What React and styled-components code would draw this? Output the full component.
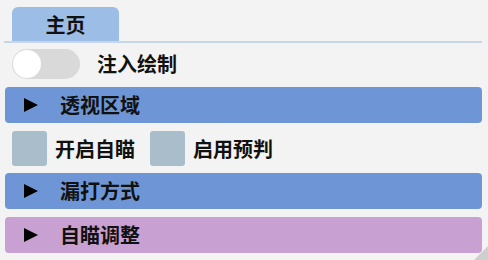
import styled, { createGlobalStyle } from "styled-components";

const Global = createGlobalStyle`
  html, body {
    margin: 0;
    background: #f3f3f3;
  }
  body {
    font-family: "Noto Sans CJK SC", "Noto Sans", sans-serif;
    color: #111;
  }
`;

const Page = styled.div`
  position: relative;
  width: 488px;
  height: 260px;
  background: #f3f3f3;
  overflow: hidden;
`;

const TabBar = styled.div`
  display: flex;
  padding: 7px 0 0 8px;
  margin: 0 6px 0 4px;
  border-bottom: 2px solid #c7d5e8;
`;

const Tab = styled.div`
  width: 107px;
  height: 34px;
  display: flex;
  align-items: center;
  justify-content: center;
  background: #9cbde6;
  border-radius: 6px 6px 0 0;
  font-size: 20px;
  font-weight: 700;
`;

const Body = styled.div`
  display: flex;
  flex-direction: column;
  padding: 6px 6px 0 5px;
  gap: 8px;
`;

const Row = styled.div`
  display: flex;
  align-items: center;
  padding-left: 7px;
  height: 30px;
  gap: 17px;
`;

const Toggle = styled.div`
  width: 68px;
  height: 30px;
  border-radius: 15px;
  background: #d9d9d9;
  display: flex;
  align-items: center;
  padding: 0 1px;
  box-sizing: border-box;
`;

const Knob = styled.div`
  width: 28px;
  height: 28px;
  border-radius: 50%;
  background: #fff;
`;

const Label = styled.span`
  font-size: 20px;
  font-weight: 700;
  line-height: 1;
`;

const Header = styled.div`
  height: 36px;
  border-radius: 4px;
  background: ${(p) => p.$bg};
  display: flex;
  align-items: center;
  padding-left: 19px;
  gap: 22px;
`;

const Arrow = styled.span`
  width: 0;
  height: 0;
  border-top: 7px solid transparent;
  border-bottom: 7px solid transparent;
  border-left: 14px solid #000;
`;

const CheckRow = styled.div`
  display: flex;
  align-items: center;
  padding-left: 7px;
  height: 35px;
  margin-bottom: -1px;
`;

const Box = styled.div`
  width: 35px;
  height: 35px;
  border-radius: 3px;
  background: #a9bdcb;
`;

const CheckItem = styled.div`
  display: flex;
  align-items: center;
  gap: 8px;
  margin-right: 15px;
`;

const Grip = styled.div`
  position: absolute;
  right: 0;
  bottom: 0;
  width: 0;
  height: 0;
  border-left: 14px solid transparent;
  border-bottom: 14px solid #cfcfcf;
`;

export default function App() {
  return (
    <Page>
      <Global />
      <TabBar>
        <Tab>主页</Tab>
      </TabBar>
      <Body>
        <Row>
          <Toggle>
            <Knob />
          </Toggle>
          <Label>注入绘制</Label>
        </Row>
        <Header $bg="#6e96d6">
          <Arrow />
          <Label>透视区域</Label>
        </Header>
        <CheckRow>
          <CheckItem>
            <Box />
            <Label>开启自瞄</Label>
          </CheckItem>
          <CheckItem>
            <Box />
            <Label>启用预判</Label>
          </CheckItem>
        </CheckRow>
        <Header $bg="#6e96d6">
          <Arrow />
          <Label>漏打方式</Label>
        </Header>
        <Header $bg="#c8a0d2">
          <Arrow />
          <Label>自瞄调整</Label>
        </Header>
      </Body>
      <Grip />
    </Page>
  );
}
